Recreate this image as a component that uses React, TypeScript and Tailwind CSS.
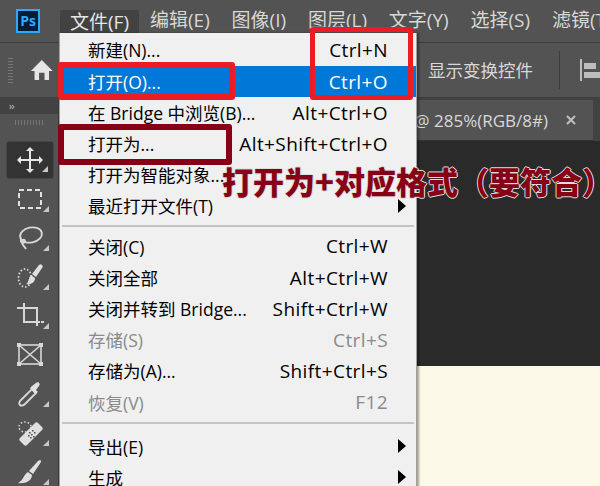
const font = "font-['Open_Sans','Noto_Sans_CJK_SC',sans-serif]";

type Item = { label: string; shortcut?: string; arrow?: boolean; disabled?: boolean; active?: boolean };

const topMenus = ["编辑(E)", "图像(I)", "图层(L)", "文字(Y)", "选择(S)", "滤镜(T)"];

const group1: Item[] = [
  { label: "新建(N)...", shortcut: "Ctrl+N" },
  { label: "打开(O)...", shortcut: "Ctrl+O", active: true },
  { label: "在 Bridge 中浏览(B)...", shortcut: "Alt+Ctrl+O" },
  { label: "打开为...", shortcut: "Alt+Shift+Ctrl+O" },
  { label: "打开为智能对象..." },
  { label: "最近打开文件(T)", arrow: true },
];

const group2: Item[] = [
  { label: "关闭(C)", shortcut: "Ctrl+W" },
  { label: "关闭全部", shortcut: "Alt+Ctrl+W" },
  { label: "关闭并转到 Bridge...", shortcut: "Shift+Ctrl+W" },
  { label: "存储(S)", shortcut: "Ctrl+S", disabled: true },
  { label: "存储为(A)...", shortcut: "Shift+Ctrl+S" },
  { label: "恢复(V)", shortcut: "F12", disabled: true },
];

const group3: Item[] = [
  { label: "导出(E)", arrow: true },
  { label: "生成", arrow: true },
];

const MenuRow = ({ item }: { item: Item }) => (
  <div
    className={
      "relative flex h-[31.2px] shrink-0 items-center justify-between pl-[28px] pr-[28px] text-[17.5px] whitespace-nowrap " +
      (item.active ? "bg-[#0078d7] text-white" : item.disabled ? "text-[#8a8a8a]" : "text-black")
    }
  >
    <span>{item.label}</span>
    {item.shortcut && <span className="text-[19px] tracking-[0.4px]">{item.shortcut}</span>}
    {item.arrow && (
      <svg className="absolute right-[10px] top-[8px]" width="8" height="14" viewBox="0 0 8 14">
        <path d="M0 0L8 7L0 14Z" fill="#000" />
      </svg>
    )}
  </div>
);

const ToolCorner = () => (
  <svg className="absolute right-[5px] bottom-[6px]" width="6" height="6" viewBox="0 0 6 6">
    <path d="M6 0V6H0Z" fill="#c8c8c8" />
  </svg>
);

const tools = [
  <path key="m" d="M14 1L10 5H13V13H5V10L1 14L5 18V15H13V23H10L14 27L18 23H15V15H23V18L27 14L23 10V13H15V5H18Z" fill="#e6e6e6" />,
  <rect key="r" x="3" y="5" width="22" height="18" fill="none" stroke="#e0e0e0" strokeWidth="2" strokeDasharray="5 3" />,
  <g key="l" fill="none" stroke="#d8d8d8" strokeWidth="1.8">
    <ellipse cx="15" cy="11" rx="11" ry="7.5" transform="rotate(-12 15 11)" />
    <path d="M5 15C4 20 9 20 9 17C9 15 6 15 6 18C6 21 9 23 10 25" />
  </g>,
  <g key="b">
    <ellipse cx="9" cy="15" rx="6.5" ry="9" fill="none" stroke="#d8d8d8" strokeWidth="1.8" strokeDasharray="1.5 2" />
    <path d="M26 2C27 3 27 4 26 5L20 14L16 11L23 2C24 1 25 1 26 2ZM15 12L19 15C19 20 14 22 10 21C13 20 12 15 15 12Z" fill="#e0e0e0" />
  </g>,
  <path key="c" d="M1 6H8M8 1V20H24M8 6H21V24M25 20H28" fill="none" stroke="#d8d8d8" strokeWidth="2" />,
  <g key="x" fill="none" stroke="#d8d8d8" strokeWidth="1.6">
    <rect x="3" y="4" width="22" height="19" />
    <path d="M3 4L25 23M25 4L3 23" />
    <path d="M1 2H5V6H1ZM23 2H27V6H23ZM1 21H5V25H1ZM23 21H27V25H23Z" fill="#d8d8d8" stroke="none" />
  </g>,
  <g key="e">
    <path d="M16 9L20 13L9 24C7 26 5 26 4 25C3 24 3 22 5 20Z" fill="none" stroke="#d8d8d8" strokeWidth="1.8" />
    <path d="M14 8L16 6L20 3C22 1 25 4 23 6L20 10L22 12L19 14Z" fill="#e0e0e0" />
  </g>,
  <g key="h">
    <ellipse cx="9" cy="8" rx="6" ry="5" fill="none" stroke="#d8d8d8" strokeWidth="1.6" strokeDasharray="1.5 2" />
    <path d="M4 19L19 4C20 3 21 3 22 4L26 8C27 9 27 10 26 11L11 26C10 27 9 27 8 26L4 22C3 21 3 20 4 19Z" fill="#e0e0e0" />
    <path d="M13 13h1.6v1.6H13ZM16 11h1.6v1.6H16ZM12 16h1.6v1.6H12ZM15 15h1.6v1.6H15ZM18 13h1.6v1.6H18ZM14 18h1.6v1.6H14ZM17 17h1.6v1.6H17Z" fill="#555" />
  </g>,
  <path key="p" d="M24 2C25 2 25 3 25 4L17 16L13 13L22 3ZM12 14L16 17C16 23 9 26 2 25C7 23 8 16 12 14Z" fill="#e0e0e0" />,
];

const Toolbar = () => (
  <div className="flex w-[59px] shrink-0 flex-col border-r border-[#3a3a3a] bg-[#535353]">
    <div className="flex h-[16px] shrink-0 items-center bg-[#424242] pl-[9px] text-[10px] leading-none tracking-tighter text-[#c8c8c8]">
      ››
    </div>
    <div className="mx-auto mt-[6px] h-[5px] w-[28px] shrink-0 bg-[repeating-linear-gradient(90deg,#777_0,#777_1px,transparent_1px,transparent_3px)]" />
    <div className="mt-[16px] flex flex-col pl-[6px]">
      {tools.map((tool, i) => (
        <div
          key={i}
          className={
            "relative flex w-[48px] shrink-0 items-center justify-center rounded-[3px] " +
            (i === 0 ? "h-[38px] border border-[#474747] bg-[#333333]" : "h-[39px]")
          }
        >
          <svg width="28" height="28" viewBox="0 0 28 28">
            {tool}
          </svg>
          {i !== 5 && <ToolCorner />}
        </div>
      ))}
    </div>
  </div>
);

export default function App() {
  return (
    <div className={"relative flex h-[486px] w-[600px] flex-col overflow-hidden bg-[#2a2a2a] " + font}>
      {/* menu bar */}
      <div className="flex h-[42px] shrink-0 items-center overflow-hidden bg-[#535353] text-[19px] whitespace-nowrap text-[#d8d8d8]">
        <div className="ml-[16px] flex h-[24px] w-[24px] shrink-0 items-center justify-center border-2 border-[#31a8ff] bg-[#001e36] text-[14px] leading-none font-bold text-[#31a8ff]">
          Ps
        </div>
        <div className="mt-[2px] ml-[20px] flex h-[25px] w-[79px] shrink-0 items-center justify-center rounded-t-[2px] bg-[#424242] text-[#e6e6e6]">
          文件(F)
        </div>
        <div className="mb-[2px] flex shrink-0 gap-[21.8px] pl-[11px]">
          {topMenus.map((m) => (
            <span key={m}>{m}</span>
          ))}
        </div>
      </div>

      {/* options bar */}
      <div className="flex h-[56px] shrink-0 items-center border-y border-[#3f3f3f] bg-[#535353] text-[#d8d8d8]">
        <div className="ml-[8px] h-[26px] w-[5px] bg-[repeating-linear-gradient(0deg,#777_0,#777_1px,transparent_1px,transparent_3px)]" />
        <svg className="ml-[17px]" width="26" height="24" viewBox="0 0 26 24">
          <path d="M13 1L1 13H5V23H10V15H16V23H21V13H25Z" fill="#e6e6e6" />
        </svg>
        <span className="ml-[375px] text-[17.5px] whitespace-nowrap">显示变换控件</span>
        <div className="ml-[26px] h-[38px] w-[1px] bg-[#3c3c3c]" />
        <div className="ml-[20px] flex items-center gap-[2px]">
          <div className="h-[22px] w-[2px] bg-[#bdbdbd]" />
          <div className="flex flex-col gap-[3px]">
            <div className="h-[6px] w-[12px] bg-[#bdbdbd]" />
            <div className="h-[6px] w-[16px] bg-[#bdbdbd]" />
          </div>
        </div>
      </div>

      <div className="flex min-h-0 flex-1">
        <Toolbar />
        <div className="flex min-w-0 flex-1 flex-col">
          {/* tab strip */}
          <div className="flex h-[43px] shrink-0 bg-[#424242] pt-[2px]">
            <div className="flex h-full w-[534px] items-center justify-end border-b border-[#333333] bg-[#535353] text-[17px] leading-none whitespace-nowrap text-[#d8d8d8]">
              <span>@ 285%(RGB/8#)</span>
              <svg className="mr-[17px] ml-[18px]" width="10" height="10" viewBox="0 0 10 10">
                <path d="M1 1L9 9M9 1L1 9" stroke="#c0c0c0" strokeWidth="2" />
              </svg>
            </div>
          </div>
          {/* canvas */}
          <div className="h-[225px] shrink-0 bg-[#2a2a2a]" />
          <div className="min-h-0 flex-1 bg-[#fcf9e8]" />
        </div>
      </div>

      {/* open file menu */}
      <div className="absolute top-[33px] left-[59px] flex h-[460px] w-[358px] flex-col border-x border-[#a0a0a0] bg-[#f0f0f0] pt-[2px] shadow-[2px_0_2px_rgba(0,0,0,0.35)]">
        {group1.map((item) => (
          <MenuRow key={item.label} item={item} />
        ))}
        <div className="mx-[2px] mt-[3px] mb-[4px] h-[2px] shrink-0 bg-[#c4c4c4]" />
        {group2.map((item) => (
          <MenuRow key={item.label} item={item} />
        ))}
        <div className="mx-[2px] mt-[4px] mb-[7px] h-[2px] shrink-0 bg-[#c4c4c4]" />
        {group3.map((item) => (
          <MenuRow key={item.label} item={item} />
        ))}
      </div>

      {/* annotations */}
      <div className="absolute top-[62px] left-[58px] h-[38px] w-[177px] rounded-[3px] border-[6px] border-[#ed1c24]" />
      <div className="absolute top-[27px] left-[310px] h-[73px] w-[103px] rounded-[3px] border-[5px] border-[#ed1c24]" />
      <div className="absolute top-[124px] left-[58px] h-[41px] w-[174px] rounded-[3px] border-[6px] border-[#880015]" />
      <div className="absolute top-[162px] left-[222px] text-[31px] leading-[38px] font-black whitespace-nowrap text-[#880015] [text-shadow:1px_0_0_#ddd,-1px_0_0_#ddd,0_1px_0_#ddd,0_-1px_0_#ddd] font-['Noto_Sans_CJK_SC',sans-serif]">
        打开为+对应格式（要符合）
      </div>
    </div>
  );
}
